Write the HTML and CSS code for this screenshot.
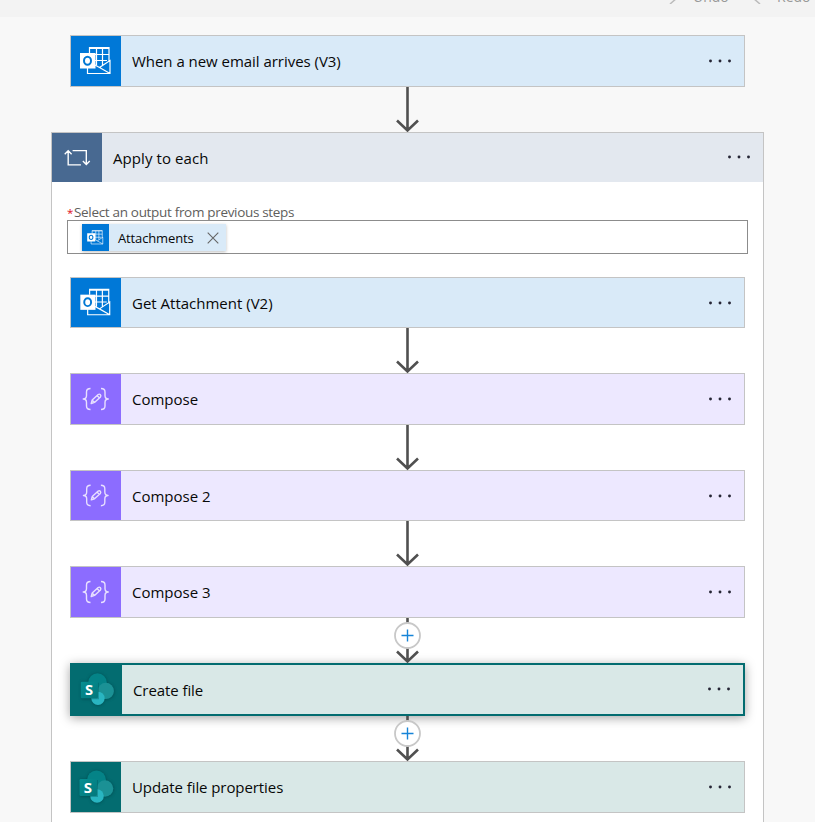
FILE: index.html
```html
<!DOCTYPE html>
<html lang="en">
<head>
<meta charset="utf-8">
<title>Flow designer</title>
<link rel="stylesheet" href="styles.css">
</head>
<body>
<svg class="defs" width="0" height="0" aria-hidden="true">
  <defs>
    <linearGradient id="tile" x1="0" y1="0" x2="1" y2="1"><stop offset="0" stop-color="#058f92"/><stop offset="1" stop-color="#03787c"/></linearGradient>
    <filter id="soft" x="-30%" y="-30%" width="160%" height="160%"><feGaussianBlur stdDeviation="1.5"/></filter>
    <symbol id="outlook" viewBox="0 0 50 50">
      <g fill="none" stroke="#fff" stroke-width="1.2">
        <path d="M18.5 17V11.500H38V26M18.500 12.500H38M25.500 12V29M31.500 12V29M18 18.500H38M18 24.500H36M16.500 32V37.500H39V24.500L28.500 31.500L39 37.500M28.500 31.500L24 29"/>
      </g>
      <path fill="#fff" d="M9 17h15.500V32.500H9z"/>
      <ellipse cx="16.500" cy="24.700" rx="3.500" ry="4" fill="none" stroke="#0078d4" stroke-width="2"/>
    </symbol>
    <symbol id="compose" viewBox="0 0 50 50">
      <g fill="none" stroke="#e8e0ff" stroke-width="1.4" stroke-linejoin="round">
        <path d="M19.500 14.500c-3 0-4 1-4 3.500v3.500c0 2.500-.8 3.500-3.300 3.500 2.500 0 3.300 1 3.300 3.500V32c0 2.500 1 3.500 4 3.500M30 14.500c3 0 4 1 4 3.500v3.500c0 2.500.8 3.500 3.300 3.500-2.500 0-3.300 1-3.300 3.500V32c0 2.500-1 3.500-4 3.500"/>
        <path d="M20.200 29.500l1-3.500 6-5.500q1.300-.8 2.200.2t.1 2.200l-6 5.500zM26 21.500l2.300 2.300M21.300 26.200l2.100 2.100"/>
      </g>
    </symbol>
    <symbol id="sharepoint" viewBox="0 0 50 50">
      <g fill="#003d42" opacity=".55" filter="url(#soft)"><circle cx="25.500" cy="18.500" r="10"/><circle cx="34.500" cy="27" r="8.500"/><circle cx="26" cy="34.500" r="7"/><path d="M9 17h18v18H9z"/></g>
      <circle cx="25.500" cy="18" r="9.500" fill="#048387"/>
      <circle cx="34" cy="26.500" r="8.300" fill="#1b9195"/>
      <circle cx="26" cy="34" r="6.800" fill="#29b5c1"/>
      <path d="M17 18h10v17H19z" fill="#014e52" opacity=".35"/>
      <rect x="8.500" y="17" width="17.500" height="17" rx="1.300" fill="url(#tile)"/>
      <text x="17" y="30.500" class="sp-letter">S</text>
    </symbol>
    <symbol id="loop" viewBox="0 0 50 50">
      <path fill="none" stroke="#fff" stroke-width="1.400" d="M20.500 18H34.500V32M31 28.500l3.500 3.700 3.500-3.700M29 32.500H16V18M12.500 21.700l3.500-3.700 3.500 3.700"/>
    </symbol>
    <symbol id="dots" viewBox="0 0 24 4">
      <g fill="#252535"><circle cx="2.500" cy="2" r="1.450"/><circle cx="12" cy="2" r="1.450"/><circle cx="21.500" cy="2" r="1.450"/></g>
    </symbol>
    <symbol id="arrow" viewBox="0 0 26 46">
      <path fill="none" stroke="#505050" stroke-width="2.600" d="M12.500 0V44M2 33.500L12.500 43.500L23 33.500"/>
    </symbol>
  </defs>
</svg>

<header class="toolbar">
  <div class="tool"><svg width="12" height="12" viewBox="0 0 12 12"><path d="M6 2l4 4-7 6"/></svg><span>Undo</span></div>
  <div class="tool redo"><svg width="12" height="12" viewBox="0 0 12 12"><path d="M6 2L2 6l7 6"/></svg><span>Redo</span></div>
</header>

<main class="flow">
  <article class="card mail">
    <svg class="icon"><use href="#outlook"/></svg><h2 class="t-new">When a new email arrives (V3)</h2><svg class="dots"><use href="#dots"/></svg>
  </article>
  <svg class="arrow first"><use href="#arrow"/></svg>

  <section class="scope">
    <div class="scope-head">
      <svg class="icon"><use href="#loop"/></svg><h2 class="t-apply">Apply to each</h2><svg class="dots"><use href="#dots"/></svg>
    </div>
    <div class="field">
      <label><b>*</b><span>Select an output from previous steps</span></label>
      <div class="input">
        <div class="token">
          <svg class="token-icon" viewBox="-1 -1 52 52"><use href="#outlook" width="50" height="50"/></svg>
          <span>Attachments</span>
          <svg class="close" viewBox="0 0 12 12"><path d="M.7.7l10.600 10.600M11.300.7L.7 11.300"/></svg>
        </div>
      </div>
    </div>
    <div class="steps">
      <article class="card mail short">
        <svg class="icon"><use href="#outlook"/></svg><h2>Get Attachment (V2)</h2><svg class="dots"><use href="#dots"/></svg>
      </article>
      <svg class="arrow"><use href="#arrow"/></svg>
      <article class="card data">
        <svg class="icon"><use href="#compose"/></svg><h2>Compose</h2><svg class="dots"><use href="#dots"/></svg>
      </article>
      <svg class="arrow"><use href="#arrow"/></svg>
      <article class="card data short">
        <svg class="icon"><use href="#compose"/></svg><h2>Compose 2</h2><svg class="dots"><use href="#dots"/></svg>
      </article>
      <svg class="arrow"><use href="#arrow"/></svg>
      <article class="card data">
        <svg class="icon"><use href="#compose"/></svg><h2>Compose 3</h2><svg class="dots"><use href="#dots"/></svg>
      </article>
      <div class="link"><svg class="arrow"><use href="#arrow"/></svg><svg class="add" viewBox="0 0 28 28"><circle cx="13.500" cy="13.500" r="12.500"/><path d="M7.500 13.500h12M13.500 7.500v12"/></svg></div>
      <article class="card share selected">
        <svg class="icon"><use href="#sharepoint"/></svg><h2 class="t-create">Create file</h2><svg class="dots"><use href="#dots"/></svg>
      </article>
      <div class="link"><svg class="arrow"><use href="#arrow"/></svg><svg class="add" viewBox="0 0 28 28"><circle cx="13.500" cy="13.500" r="12.500"/><path d="M7.500 13.500h12M13.500 7.500v12"/></svg></div>
      <article class="card share">
        <svg class="icon"><use href="#sharepoint"/></svg><h2 class="t-update">Update file properties</h2><svg class="dots"><use href="#dots"/></svg>
      </article>
    </div>
  </section>
</main>
</body>
</html>
```
FILE: styles.css
```css
* { box-sizing: border-box; }
body {
  display: flex;
  flex-direction: column;
  margin: 0;
  height: 822px;
  overflow: hidden;
  background: #f8f8f8;
  font-family: "Open Sans", "Noto Sans", sans-serif;
  color: #080808;
}
svg { display: block; flex: none; }
.defs { position: absolute; }

.toolbar {
  display: flex;
  flex: none;
  justify-content: flex-end;
  height: 17px;
  padding-right: 2px;
  background: #f3f3f3;
  overflow: hidden;
}
.tool {
  display: flex;
  gap: 14px;
  width: 84px;
  height: 20px;
  margin-top: -13px;
  font-size: 14px;
  line-height: 19px;
  color: #999;
}
.tool svg { margin-top: 5px; }
.tool path { fill: none; stroke: #bbb; stroke-width: 1.5; }
.tool.redo { width: 62px; }

.flow { display: flex; flex: 1; flex-direction: column; min-height: 0; padding: 18px 51px 0; }

.card {
  display: flex;
  align-items: center;
  height: 52px;
  border: 1px solid #c4c4c4;
}
.card.short { height: 51px; }
.flow > .card { flex: none; margin: 0 19px; }
.icon { width: 50px; height: 50px; }
.short .icon { height: 49px; }
.mail { background: #d9eaf8; }
.mail .icon { background: #0078d7; }
.data { background: #ede8ff; }
.data .icon { background: #8c6cff; }
.share { background: #d9e8e7; }
.share .icon { background: #036c70; }
.card.selected {
  height: 53px;
  border: 2px solid #036c70;
  box-shadow: 0 2px 10px rgba(0, 0, 0, .36);
}
.selected .icon { height: 49px; }
.sp-letter {
  font: 700 15px "Open Sans", sans-serif;
  fill: #fff;
  text-anchor: middle;
}

h2 {
  flex: 1;
  margin: 0 0 0 11px;
  font-size: 15px;
  font-weight: 400;
  line-height: 22px;
  white-space: nowrap;
}
.t-new { letter-spacing: -.035px; }
.t-apply { letter-spacing: .08px; }
.t-create { letter-spacing: -.08px; }
.t-update { letter-spacing: -.08px; }
.dots { width: 24px; height: 4px; margin: 0 12.5px 1px 0; }
.short .dots { margin-bottom: 0; }
.scope-head .dots { margin-bottom: 2px; margin-right: 12.5px; }
.selected .dots { margin-right: 12.5px; }

.arrow { width: 26px; height: 46px; margin: -1px auto 0; }
.steps .arrow { margin: 0 auto -1px; }
.arrow.first { margin: 0 auto -1px; }

.scope {
  flex: 1;
  min-height: 0;
  border: 1px solid #c4c4c4;
  border-bottom: 0;
  background: #fff;
}
.scope-head {
  display: flex;
  align-items: center;
  height: 49px;
  background: #e3e8ef;
}
.scope-head .icon { height: 49px; background: #486991; }

.field { padding: 20px 15px 0; }
label {
  display: flex;
  gap: 2px;
  height: 18px;
  font-size: 13.5px;
  letter-spacing: -.32px;
  line-height: 21px;
  color: #605e5c;
  white-space: nowrap;
}
label b { width: 5px; font-size: 11.5px; color: #e00b1c; font-weight: 400; }
.input {
  height: 34px;
  padding: 3px 14px;
  border: 1px solid #8c8c8c;
}
.token {
  display: flex;
  align-items: center;
  width: 144px;
  height: 27px;
  background: #d9eaf8;
  box-shadow: 0 1px 3px rgba(0, 0, 0, .25);
  font-size: 13px;
  letter-spacing: -.14px;
}
.token span { width: 80px; margin: 0 9px 0 9px; white-space: nowrap; }
.token-icon { width: 27px; height: 27px; background: #0078d7; }
.close { width: 12px; height: 12px; }
.close path { fill: none; stroke: #666; stroke-width: 1.1; }

.steps { padding: 23px 18px 0; }
.link { position: relative; height: 45px; }
.add { position: absolute; left: 50%; top: 4px; width: 28px; height: 28px; margin-left: -14px; }
.add circle { fill: #fff; stroke: #c8c8c8; stroke-width: 1.8; }
.add path { fill: none; stroke: #1684d8; stroke-width: 1.4; }
```
